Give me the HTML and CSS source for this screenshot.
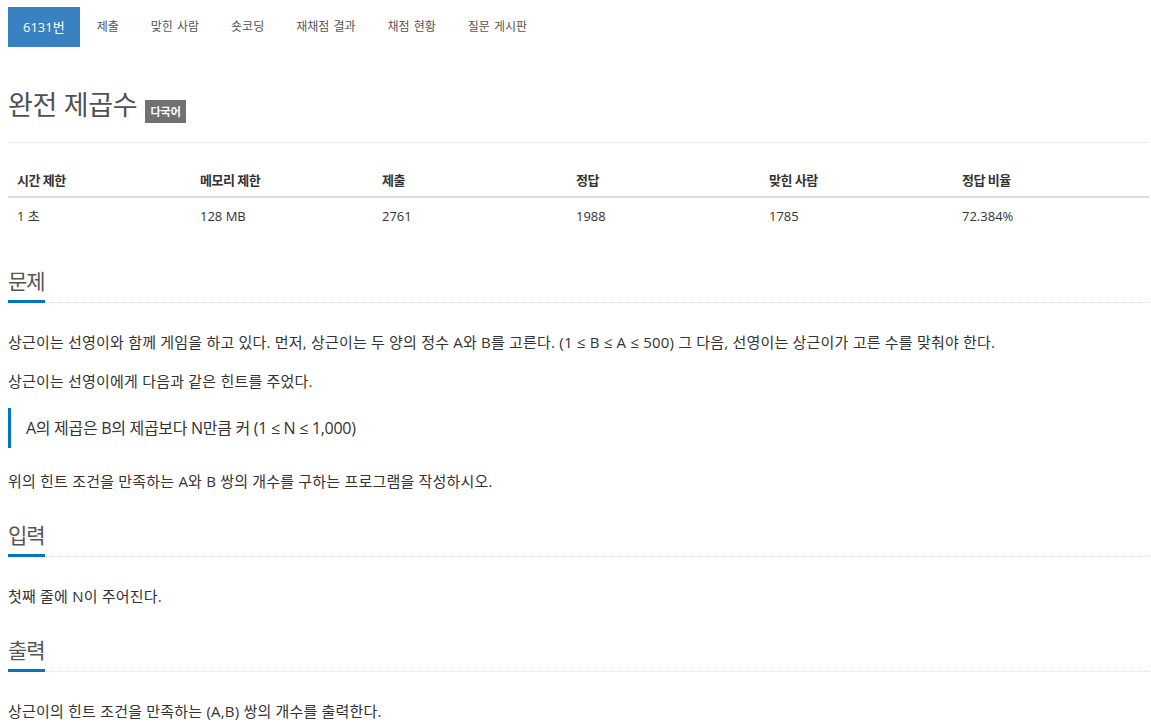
FILE: index.html
```html
<!DOCTYPE html>
<html lang="ko">
<head>
  <meta charset="UTF-8">
  <title>완전 제곱수</title>
  <link rel="stylesheet" href="styles.css">
</head>
<body>
  <div class="wrapper">
    <!-- 문제 메뉴 -->
    <ul class="problem-menu">
      <li class="active"><a href="#">6131번</a></li>
      <li><a href="#">제출</a></li>
      <li><a href="#">맞힌 사람</a></li>
      <li><a href="#">숏코딩</a></li>
      <li><a href="#">재채점 결과</a></li>
      <li><a href="#">채점 현황</a></li>
      <li><a href="#">질문 게시판</a></li>
    </ul>

    <div class="page-header">
      <h1><span class="problem-title">완전 제곱수</span><span class="label">다국어</span></h1>
    </div>

    <table class="problem-info">
      <colgroup>
        <col style="width: 183px">
        <col style="width: 182px">
        <col style="width: 194px">
        <col style="width: 193px">
        <col style="width: 193px">
        <col>
      </colgroup>
      <thead>
        <tr>
          <th>시간 제한</th>
          <th>메모리 제한</th>
          <th>제출</th>
          <th>정답</th>
          <th>맞힌 사람</th>
          <th>정답 비율</th>
        </tr>
      </thead>
      <tbody>
        <tr>
          <td>1 초</td>
          <td>128 MB</td>
          <td>2761</td>
          <td>1988</td>
          <td>1785</td>
          <td>72.384%</td>
        </tr>
      </tbody>
    </table>

    <section class="problem-section">
      <div class="headline"><h2>문제</h2></div>
      <div class="problem-text">
        <p>상근이는 선영이와 함께 게임을 하고 있다. 먼저, 상근이는 두 양의 정수 A와 B를 고른다. (1 ≤ B ≤ A ≤ 500) 그 다음, 선영이는 상근이가 고른 수를 맞춰야 한다.</p>
        <p>상근이는 선영이에게 다음과 같은 힌트를 주었다.</p>
        <blockquote>A의 제곱은 B의 제곱보다 N만큼 커 (1 ≤ N ≤ 1,000)</blockquote>
        <p>위의 힌트 조건을 만족하는 A와 B 쌍의 개수를 구하는 프로그램을 작성하시오.</p>
      </div>
    </section>

    <section class="problem-section">
      <div class="headline"><h2>입력</h2></div>
      <div class="problem-text">
        <p>첫째 줄에 N이 주어진다.</p>
      </div>
    </section>

    <section class="problem-section">
      <div class="headline"><h2>출력</h2></div>
      <div class="problem-text">
        <p>상근이의 힌트 조건을 만족하는 (A,B) 쌍의 개수를 출력한다.</p>
      </div>
    </section>
  </div>
</body>
</html>
```

FILE: styles.css
```css
body {
  margin: 0;
  font-family: "Open Sans", "Noto Sans CJK KR", sans-serif;
  font-size: 14px;
  color: #333;
  background: #fff;
}
.wrapper {
  padding: 7px 2px 0 8px;
}

/* 메뉴 */
.problem-menu {
  list-style: none;
  margin: 0;
  padding: 0;
  display: flex;
  gap: 2px;
}
.problem-menu a {
  display: block;
  padding: 10px 15px;
  line-height: 20px;
  font-size: 12px;
  word-spacing: 1px;
  color: #555;
  text-decoration: none;
}
.problem-menu .active a {
  background: #3a81c2;
  color: #fff;
  font-size: 13px;
}

/* 제목 */
.page-header {
  margin-top: 40px;
  padding-bottom: 19px;
  border-bottom: 1px solid #eee;
}
.page-header h1 {
  display: flex;
  align-items: flex-end;
  gap: 8px;
  margin: 0;
  font-size: 27px;
  font-weight: 400;
  line-height: 36px;
  color: #505050;
}
.problem-title {
  letter-spacing: -0.3px;
}
.label {
  display: inline-block;
  padding: 5px 5px;
  font-size: 11px;
  line-height: 13px;
  font-weight: 700;
  color: #fff;
  background: #717171;
}

/* 정보 표 */
.problem-info {
  width: 100%;
  margin: 19px 0 20px;
  border-collapse: collapse;
  table-layout: fixed;
  font-size: 13px;
}
.problem-info th,
.problem-info td {
  text-align: left;
  padding: 8px 9px;
  line-height: 20px;
}
.problem-info th {
  padding-bottom: 6px;
  font-weight: 700;
  letter-spacing: -0.5px;
  color: #333;
  border-bottom: 2px solid #ddd;
}

/* 본문 */
.headline {
  border-bottom: 1px dotted #ddd;
  margin-bottom: 27px;
}
.headline h2 {
  display: inline-block;
  margin: 0 0 -1px;
  padding: 14px 0 6px;
  font-size: 21px;
  font-weight: 400;
  line-height: 26px;
  letter-spacing: -1px;
  color: #555;
  border-bottom: 3px solid #0076c0;
}
.problem-text {
  font-size: 15px;
  letter-spacing: 0.2px;
}
.problem-text p {
  margin: 0 0 15px;
  line-height: 24px;
}
.problem-text blockquote {
  margin: 0 0 21px;
  padding: 8px 15px;
  border-left: 3px solid #0076c0;
  font-size: 16px;
  letter-spacing: -0.3px;
  line-height: 24px;
}
```
